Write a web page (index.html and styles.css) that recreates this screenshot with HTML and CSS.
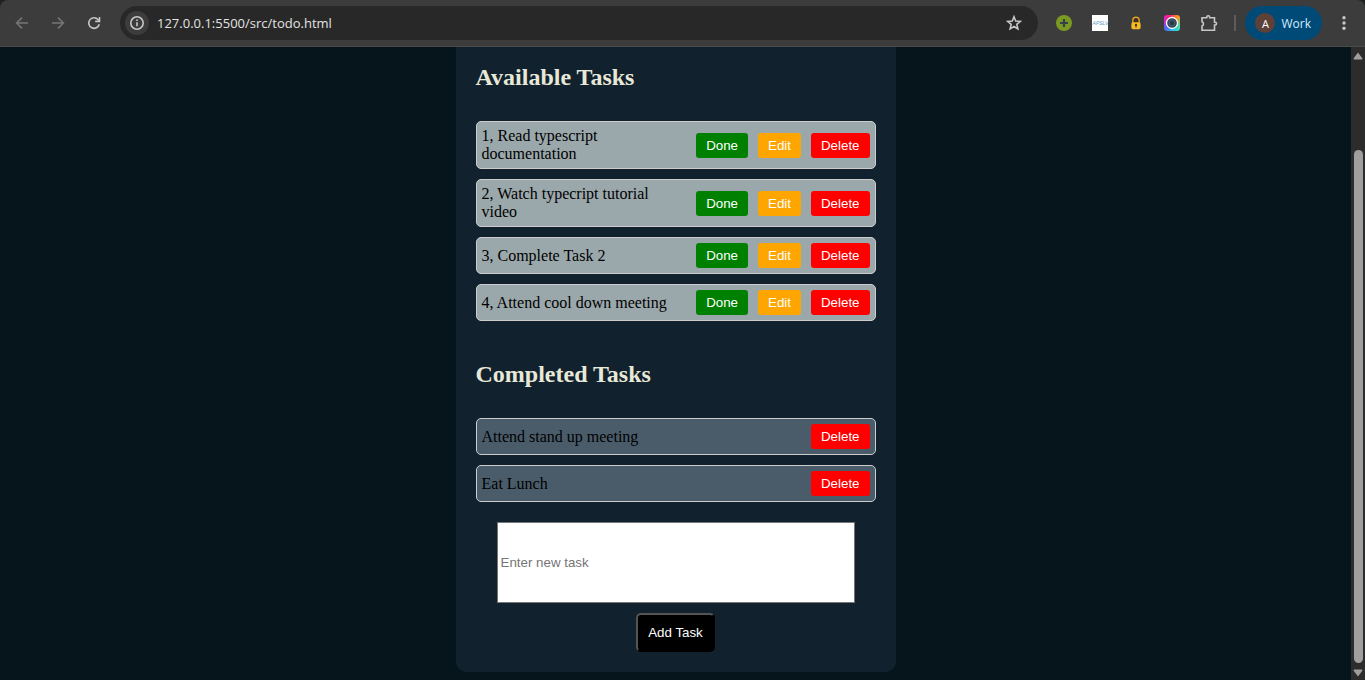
FILE: index.html
```html
<!DOCTYPE html>
<html lang="en">
<head>
<meta charset="utf-8">
<title>Todo</title>
<link rel="stylesheet" href="styles.css">
</head>
<body>
<div class="window">
  <header class="toolbar">
    <nav class="nav">
      <button class="icon-button dim" type="button" aria-label="Back">
        <svg width="16" height="16" viewBox="0 0 16 16"><path d="M14 8H3M8 2.6 2.6 8 8 13.4"/></svg>
      </button>
      <button class="icon-button dim" type="button" aria-label="Forward">
        <svg width="16" height="16" viewBox="0 0 16 16"><path d="M2 8h11M8 2.6 13.4 8 8 13.4"/></svg>
      </button>
      <button class="icon-button" type="button" aria-label="Reload">
        <svg width="16" height="16" viewBox="0 0 16 16"><path d="M13.2 9.2A5.3 5.3 0 1 1 12 4.5L13.4 6"/><path d="M13.5 2v4.4H9.2"/></svg>
      </button>
    </nav>
    <div class="address">
      <button class="site-info" type="button" aria-label="Site information">
        <svg width="16" height="16" viewBox="0 0 16 16"><circle cx="8" cy="8" r="6.2"/><path d="M8 7.2v4M8 4.4v1.6"/></svg>
      </button>
      <input class="url" type="text" aria-label="Address" value="127.0.0.1:5500/src/todo.html">
      <button class="icon-button" type="button" aria-label="Bookmark">
        <svg width="16" height="16" viewBox="0 0 16 16"><path d="m8 1.8 1.7 4.2 4.6.4-3.5 3 1.1 4.5L8 11.500l-3.900 2.400 1.100-4.500-3.500-3 4.600-.4z"/></svg>
      </button>
    </div>
    <div class="extensions">
      <svg width="16" height="16" viewBox="0 0 16 16"><circle cx="8" cy="8" r="8" fill="#7a9a22"/><path d="M8 4v8M4 8h8" stroke="#37404a" stroke-width="2.200"/></svg>
      <span class="ext-label">APSLV</span>
      <svg width="16" height="16" viewBox="0 0 16 16"><path d="M4.800 8V5.500a3.200 3.200 0 0 1 6.400 0V8" fill="#38312b" stroke="#e0a41c" stroke-width="1.400"/><rect x="3.400" y="7.200" width="9.200" height="7" rx="1.800" fill="#f7bd20"/><circle cx="8" cy="10" r="1.200" fill="#49391b"/><path d="M8 10v2.600" stroke="#49391b"/></svg>
      <span class="ext-lens"><svg width="16" height="16" viewBox="0 0 16 16"><circle cx="8" cy="8" r="5.500" fill="#354657" stroke="#fff" stroke-width="1.300"/><circle cx="8" cy="8" r="2.800" fill="#26394c" stroke="#52677a" stroke-width=".8"/></svg></span>
      <button class="icon-button" type="button" aria-label="Extensions">
        <svg width="18" height="18" viewBox="0 0 18 18"><path d="M2 3.700h4.700V3.200a1.500 1.500 0 0 1 3 0v.5h4.800V8.200h.6a1.400 1.400 0 0 1 0 2.800h-.6v5.200H2v-4.100a2.300 2.300 0 0 0 0-4.300z"/></svg>
      </button>
    </div>
    <span class="divider"></span>
    <button class="profile" type="button"><span class="avatar">A</span>Work</button>
    <button class="icon-button menu" type="button" aria-label="Menu">
      <svg width="16" height="16" viewBox="0 0 16 16"><circle cx="8" cy="2.700" r="1.700"/><circle cx="8" cy="8" r="1.700"/><circle cx="8" cy="13.300" r="1.700"/></svg>
    </button>
  </header>
  <div class="viewport">
    <main class="page">
      <div class="card">
        <h2 class="heading">Available Tasks</h2>
        <ul class="list">
          <li class="task"><span class="name">1, Read typescript documentation</span><span class="actions"><button class="btn done">Done</button><button class="btn edit">Edit</button><button class="btn delete">Delete</button></span></li>
          <li class="task"><span class="name">2, Watch typecript tutorial video</span><span class="actions"><button class="btn done">Done</button><button class="btn edit">Edit</button><button class="btn delete">Delete</button></span></li>
          <li class="task"><span class="name">3, Complete Task 2</span><span class="actions"><button class="btn done">Done</button><button class="btn edit">Edit</button><button class="btn delete">Delete</button></span></li>
          <li class="task"><span class="name">4, Attend cool down meeting</span><span class="actions"><button class="btn done">Done</button><button class="btn edit">Edit</button><button class="btn delete">Delete</button></span></li>
        </ul>
        <h2 class="heading completed-heading">Completed Tasks</h2>
        <ul class="list">
          <li class="task completed"><span class="name">Attend stand up meeting</span><span class="actions"><button class="btn delete">Delete</button></span></li>
          <li class="task completed"><span class="name">Eat Lunch</span><span class="actions"><button class="btn delete">Delete</button></span></li>
        </ul>
        <form class="form">
          <input class="new-task" type="text" placeholder="Enter new task" aria-label="New task">
          <button class="add" type="button">Add Task</button>
        </form>
      </div>
    </main>
    <div class="scrollbar" aria-hidden="true">
      <svg class="arrow" width="10" height="8" viewBox="0 0 10 8"><path d="M5 .5 9.500 6.500Q9.500 7.500 8.500 7.500h-7Q.5 7.500.5 6.500z"/></svg>
      <div class="track"><span class="thumb"></span></div>
      <svg class="arrow" width="10" height="8" viewBox="0 0 10 8"><path d="M5 7.500.5 1.500Q.5.5 1.500.5h7q1 0 1 1z"/></svg>
    </div>
  </div>
</div>
</body>
</html>
```
FILE: styles.css
```css
* { box-sizing: border-box; }

body {
  margin: 0;
  background: #1f2020;
}

button { cursor: pointer; }

.window {
  display: flex;
  flex-direction: column;
  height: 100vh;
  overflow: hidden;
}

/* Browser toolbar */
.toolbar {
  display: flex;
  align-items: center;
  flex: none;
  padding: 6px 13px 6px 14px;
  background: #3c3c3c;
  border-bottom: 1px solid #4a4a4a;
  border-radius: 8px 8px 0 0;
  font-family: "Noto Sans", sans-serif;
}

.icon-button {
  display: flex;
  padding: 0;
  border: 0;
  background: none;
}

.icon-button svg,
.site-info svg {
  fill: none;
  stroke: #c7c7c7;
  stroke-width: 1.6;
}

.icon-button.dim svg { stroke: #757575; }

.nav {
  display: flex;
  gap: 20px;
  margin-right: 18px;
}

.address {
  display: flex;
  flex: 1;
  align-items: center;
  height: 34px;
  padding: 0 16px 0 5px;
  border-radius: 17px;
  background: #282828;
}

.site-info {
  display: grid;
  place-items: center;
  width: 24px;
  height: 24px;
  padding: 0;
  border: 0;
  border-radius: 50%;
  background: #3c3c3c;
}

.url {
  flex: 1;
  min-width: 0;
  margin-left: 8px;
  padding: 0;
  border: 0;
  outline: 0;
  background: none;
  color: #e3e3e3;
  font: 13px "Open Sans", sans-serif;
}

.extensions {
  display: flex;
  align-items: center;
  gap: 20px;
  margin-left: 18px;
}

.ext-label {
  display: grid;
  place-items: center;
  width: 16px;
  height: 16px;
  background: #fff;
  color: #5b9bc0;
  font: italic 5px "Liberation Sans", sans-serif;
}

.ext-lens {
  display: flex;
  border-radius: 3px;
  background: conic-gradient(from 45deg, #ff9a1c, #5bdc9a, #25cff0, #4a6cf0, #d52bd0, #ff1d75, #ff9a1c);
}

.divider {
  width: 2px;
  height: 16px;
  margin: 0 9px 0 16px;
  background: #5c5c5c;
}

.profile {
  display: flex;
  align-items: center;
  gap: 6px;
  height: 34px;
  padding: 0 11px 0 10px;
  border: 0;
  border-radius: 17px;
  background: #004a77;
  color: #d3ebff;
  font: 12px "Open Sans", sans-serif;
}

.avatar {
  display: grid;
  place-items: center;
  width: 20px;
  height: 20px;
  border-radius: 50%;
  background: #5d4037;
  color: #fff;
  font-size: 11px;
}

.menu { margin-left: 14px; }

.menu svg {
  fill: #c7c7c7;
  stroke: none;
}

/* Page */
.viewport {
  display: flex;
  flex: 1;
  min-height: 0;
}

.page {
  flex: 1;
  background: #05151b;
  font-family: "Liberation Serif", serif;
  font-size: 16px;
}

.card {
  width: 440px;
  max-width: 100%;
  margin: 0 auto;
  padding: 17px 20px 20px;
  border-radius: 0 0 10px 10px;
  background: #11212d;
}

.heading {
  margin: 0 0 30px;
  color: #e8e8d8;
  font-size: 24px;
  line-height: 27px;
}

.completed-heading { margin-top: 40px; }

.list {
  display: flex;
  flex-direction: column;
  gap: 10px;
  margin: 0;
  padding: 0;
  list-style: none;
}

.task {
  display: flex;
  align-items: center;
  justify-content: space-between;
  gap: 10px;
  padding: 5px;
  border: 1px solid #ccc;
  border-radius: 5px;
  background: #9ba8ab;
  color: #000;
  line-height: 18px;
}

.task.completed { background: #4a5c6a; }

.name { max-width: 192px; }

.actions {
  display: flex;
  gap: 10px;
}

.btn {
  padding: 5px 10px;
  border: 0;
  border-radius: 3px;
  color: #fff;
  font-family: "Liberation Sans", Arial, sans-serif;
}

.done { background: #008000; }
.edit { background: #ffa500; }
.delete { background: #f00; }

.form {
  display: flex;
  flex-direction: column;
  align-items: center;
  gap: 10px;
  margin-top: 20px;
}

.new-task {
  width: 358px;
  max-width: 100%;
  height: 81px;
  padding: 1px 3px;
  border: 1px solid #767676;
  background: #fff;
  font-family: "Liberation Sans", Arial, sans-serif;
}

.new-task::placeholder { color: #757575; }

.add {
  padding: 10px;
  border: 2px outset #000;
  border-radius: 5px;
  background: #000;
  color: #fff;
  font-family: "Liberation Sans", Arial, sans-serif;
}

/* Scrollbar */
.scrollbar {
  display: flex;
  flex-direction: column;
  align-items: center;
  width: 14px;
  padding: 5px 0 3px;
  background: #2c2c2c;
}

.arrow {
  flex: none;
  fill: #9f9f9f;
}

.track {
  display: flex;
  flex: 1;
  align-items: flex-end;
  padding: 6px 0;
}

.thumb {
  width: 9px;
  height: 86%;
  border-radius: 5px;
  background: #9f9f9f;
}
```
